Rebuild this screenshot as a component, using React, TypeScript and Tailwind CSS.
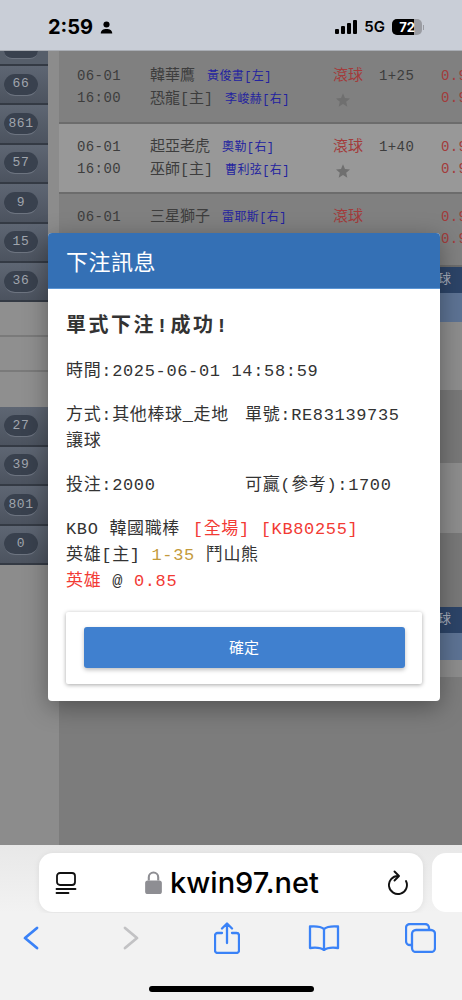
import React from "react";

const mono = "font-['Liberation_Mono','Noto_Sans_CJK_TC',monospace]";

function Pill({ n }: { n?: string }) {
  return (
    <div className="h-[39.4px] shrink-0 flex items-center pl-1 bg-gradient-to-b from-[#5e6673] to-[#4c535f] border-b-2 border-[#343a44]">
      {n !== undefined && (
        <div className={`w-[34px] h-[22px] rounded-full bg-[#39414e] border-b border-[#6d7480] flex items-center justify-center text-[#a0a5ad] text-[13px] tracking-[0.6px] ${mono}`}>
          {n}
        </div>
      )}
    </div>
  );
}

function Game({ dark, first, date, time, a, ap, b, bp, hdp, star = true }: any) {
  const base = dark
    ? `flex pl-[18px] h-[73px] border-b-2 border-[#6c6c6c] overflow-hidden shrink-0 bg-[#808080] ${mono}`
    : `flex pl-[18px] h-[70px] border-b-2 border-[#6c6c6c] overflow-hidden shrink-0 bg-[#989898] ${mono}`;
  return (
    <div className={first ? `${base} pt-[17px]` : `${base} pt-[15px]`}>
      <div className="w-[73px] shrink-0 flex flex-col gap-[5px] text-[14px] leading-[17px] tracking-[0.4px] text-[#3d3d3d]">
        <span>{date}</span>
        <span>{time}</span>
      </div>
      <div className="w-[183px] shrink-0 flex flex-col gap-[5px] text-[15px] leading-[17px] text-[#3d3d3d] whitespace-nowrap">
        <span>{a} <span className="text-[12px] tracking-[0.4px] text-[#23239f] ml-[3px]">{ap}</span></span>
        <span>{b} <span className="text-[12px] tracking-[0.4px] text-[#23239f] ml-[3px]">{bp}</span></span>
      </div>
      <div className="w-[46px] shrink-0 flex flex-col text-[15px] leading-[17px] text-[#a33b3b]">
        <span>滾球</span>
        {star && (
          <svg viewBox="0 0 24 24" className="w-[16px] h-[16px] mt-[7px] ml-[2px]" fill="#6f6f6f"><path d="M12 2l3 7 7.500 .7-5.700 5 1.700 7.300-6.500-3.900-6.500 3.900 1.700-7.300-5.700-5 7.500-.7z" /></svg>
        )}
      </div>
      <div className="w-[62px] shrink-0 text-[14px] leading-[17px] tracking-[0.4px] text-[#3d3d3d]">{hdp}</div>
      <div className="shrink-0 flex flex-col gap-[5px] text-[14px] leading-[17px] tracking-[0.4px] text-[#a33b3b]">
        <span>0.9</span>
        <span>0.9</span>
      </div>
    </div>
  );
}

function Navy() {
  return <div className="h-[26px] shrink-0 flex items-center justify-end pr-[11px] pb-[3px] text-[#a6adbb] text-[13px] bg-[#2c4468]">球</div>;
}

export default function App() {
  return (
    <div className="relative w-[462px] h-[1000px] overflow-hidden flex flex-col bg-[#8c8c8c] font-['Liberation_Sans','Noto_Sans_CJK_TC',sans-serif]">
      {/* status bar */}
      <div className="h-[51px] shrink-0 bg-[#c9ced7] border-b border-[#a9adb4] flex items-center pt-[4px] pl-[48px] pr-[38px] text-black">
        <span className="text-[20px] font-bold font-['Inter','Liberation_Sans',sans-serif]">2:59</span>
        <svg viewBox="0 0 14 14" className="w-[13px] h-[13px] ml-[7px]" fill="#000"><circle cx="7" cy="3.800" r="3.300" /><path d="M.8 13.500c0-3.500 2.700-5 6.200-5s6.200 1.500 6.200 5z" /></svg>
        <div className="flex-1" />
        <div className="flex items-end gap-[2px] h-[14px]">
          <div className="w-[4px] h-[5px] bg-black rounded-[1px]" />
          <div className="w-[4px] h-[8px] bg-black rounded-[1px]" />
          <div className="w-[4px] h-[11px] bg-black rounded-[1px]" />
          <div className="w-[4px] h-[14px] bg-black rounded-[1px]" />
        </div>
        <span className="ml-[7px] text-[15px] font-semibold font-['Inter','Liberation_Sans',sans-serif]">5G</span>
        <div className="ml-[7px] relative w-[30px] h-[16px] rounded-[5px] bg-[#9a9ca2] overflow-hidden flex items-center justify-center">
          <div className="absolute left-0 top-0 bottom-0 w-[22px] bg-black" />
          <span className="relative text-white text-[13px] font-bold leading-none font-['Inter','Liberation_Sans',sans-serif]">72</span>
        </div>
        <div className="ml-[1px] w-[1px] h-[5px] bg-[#9a9ca2]" />
      </div>

      {/* page behind modal */}
      <div className="h-[794px] shrink-0 flex overflow-hidden">
        <div className="w-[48px] shrink-0 flex flex-col">
          <div className="h-[15px] shrink-0 flex pl-1 bg-[#565e6a] border-b-2 border-[#343a44]">
            <div className="w-[34px] h-[8px] rounded-b-full bg-[#39414e] border-b border-[#6d7480]" />
          </div>
          <Pill n="66" />
          <Pill n="861" />
          <Pill n="57" />
          <Pill n="9" />
          <Pill n="15" />
          <Pill n="36" />
          <div className="h-[35px] shrink-0 bg-[#8f8f8f] border-b-2 border-[#7a7a7a]" />
          <div className="h-[35px] shrink-0 bg-[#8f8f8f] border-b-2 border-[#7a7a7a]" />
          <div className="h-[35px] shrink-0 bg-[#8f8f8f]" />
          <Pill n="27" />
          <Pill n="39" />
          <Pill n="801" />
          <Pill n="0" />
        </div>
        <div className="w-[11px] shrink-0" />
        <div className="flex-1 min-w-0 flex flex-col overflow-hidden">
          <Game dark first date="06-01" time="16:00" a="韓華鷹" ap="黃俊書[左]" b="恐龍[主]" bp="李峻赫[右]" hdp="1+25" />
          <Game date="06-01" time="16:00" a="起亞老虎" ap="奧勒[右]" b="巫師[主]" bp="曹利弦[右]" hdp="1+40" />
          <Game dark date="06-01" a="三星獅子" ap="雷耶斯[右]" star={false} />
          <Navy />
          <div className="h-[29px] shrink-0 bg-[#5d7394]" />
          <div className="h-[68px] shrink-0 bg-[#8d8d8d]" />
          <div className="h-[73px] shrink-0 bg-[#787878]" />
          <div className="h-[70px] shrink-0 bg-[#8d8d8d]" />
          <div className="h-[74px] shrink-0 bg-[#787878]" />
          <Navy />
          <div className="h-[27px] shrink-0 bg-[#5d7394]" />
          <div className="h-[17px] shrink-0 bg-[#8d8d8d]" />
          <div className="flex-1 bg-[#7c7c7c]" />
        </div>
      </div>

      {/* safari toolbar */}
      <div className="flex-1 bg-[#f2f2f2] relative">
        <div className="h-[68px] bg-gradient-to-b from-[#e8e8e8] to-[#f2f2f2] pt-[8px] pl-[39px] flex gap-[9px] overflow-hidden">
          <div className="w-[384px] h-[59px] shrink-0 bg-white rounded-[14px] shadow-[0_1px_6px_rgba(0,0,0,0.08)] flex items-center pl-[16px] pr-[15px]">
            <svg viewBox="0 0 22 24" className="w-[22px] h-[24px]" fill="none" stroke="#111" strokeWidth="1.800" strokeLinecap="round">
              <rect x="2" y="2" width="18" height="12" rx="3" />
              <path d="M1.500 18h19M1.500 22h12" />
            </svg>
            <div className="flex-1 flex items-center justify-center pr-[1px]">
              <svg viewBox="0 0 16 22" className="w-[17px] h-[23px] mr-[8px]" fill="#8e8e93">
                <path d="M3.500 9V6a4.500 4.500 0 0 1 9 0v3" fill="none" stroke="#8e8e93" strokeWidth="2" />
                <rect x="0" y="9" width="16" height="13" rx="2.500" />
              </svg>
              <span className="text-[29px] font-medium leading-none text-black font-['Inter','Liberation_Sans',sans-serif]">kwin97.net</span>
            </div>
            <svg viewBox="0 0 20 25" className="w-[20px] h-[25px]" fill="none" stroke="#111" strokeWidth="1.900" strokeLinecap="round" strokeLinejoin="round">
              <path d="M10 6A9 9 0 1 0 18 11" />
              <path d="M6.500 1.500L11 6l-4.500 4.500" />
            </svg>
          </div>
          <div className="w-[60px] h-[59px] shrink-0 bg-white rounded-l-[14px]" />
        </div>
        <div className="h-[50px] flex items-center pl-[23px]">
          <svg viewBox="0 0 16 24" className="w-[16px] h-[24px] shrink-0" fill="none" stroke="#3a82f7" strokeWidth="2.800" strokeLinecap="round" strokeLinejoin="round"><path d="M14 2L2 12l12 10" /></svg>
          <svg viewBox="0 0 16 24" className="w-[16px] h-[24px] shrink-0 ml-[84px]" fill="none" stroke="#c2c2c4" strokeWidth="2.800" strokeLinecap="round" strokeLinejoin="round"><path d="M2 2l12 10L2 22" /></svg>
          <svg viewBox="0 0 26 32" className="w-[26px] h-[32px] shrink-0 ml-[75px]" fill="none" stroke="#3a82f7" strokeWidth="2.300" strokeLinecap="round" strokeLinejoin="round"><path d="M8 11H3.500A2.500 2.500 0 0 0 1 13.500v15A2.500 2.500 0 0 0 3.500 31h19a2.500 2.500 0 0 0 2.500-2.500v-15a2.500 2.500 0 0 0-2.500-2.500H18M13 21V2M8 6.500L13 1.500l5 5" /></svg>
          <svg viewBox="0 0 32 26" className="w-[32px] h-[26px] shrink-0 ml-[68px]" fill="none" stroke="#3a82f7" strokeWidth="2.300" strokeLinecap="round" strokeLinejoin="round"><path d="M16 4C13 1.500 8 1 2 1.500V23c6-.7 11-.4 14 2 3-2.400 8-2.700 14-2V1.500C24 1 19 1.500 16 4zM16 4v21" /></svg>
          <svg viewBox="0 0 31 30" className="w-[31px] h-[30px] shrink-0 ml-[65px]" fill="none" stroke="#3a82f7" strokeWidth="2.300" strokeLinejoin="round"><path d="M7 22H5a4 4 0 0 1-4-4V5a4 4 0 0 1 4-4h15a4 4 0 0 1 4 4v2" /><rect x="7" y="7" width="23" height="22" rx="4" /></svg>
        </div>
        <div className="absolute left-[149px] top-[141px] w-[165px] h-[6px] rounded-full bg-black" />
      </div>

      {/* modal */}
      <div className={`absolute left-[48px] top-[233px] w-[392px] h-[468px] bg-white rounded-[4px] shadow-[0_6px_24px_rgba(0,0,0,0.35)] overflow-hidden flex flex-col ${mono} text-[#333333]`}>
        <div className="h-[56px] shrink-0 bg-[#3470b5] border-b border-[#5b95d4] flex items-center pb-[2px] pl-[18px] text-white text-[22px] tracking-[0.5px] font-['Noto_Sans_CJK_TC',sans-serif] leading-none">
          下注訊息
        </div>
        <div className="flex-1 flex flex-col px-[18px] text-[17px] leading-[26px] tracking-[0.65px]">
          <div className="mt-[24px] text-[20px] font-bold leading-[28px] tracking-[2.5px]">單式下注!成功!</div>
          <div className="mt-[18px]">時間:2025-06-01 14:58:59</div>
          <div className="mt-[18px] flex">
            <span className="w-[179px] shrink-0 whitespace-nowrap">方式:其他棒球_走地</span>
            <span className="whitespace-nowrap">單號:RE83139735</span>
          </div>
          <div>讓球</div>
          <div className="mt-[18px] flex">
            <span className="w-[179px] shrink-0">投注:2000</span>
            <span className="whitespace-nowrap">可贏(參考):1700</span>
          </div>
          <div className="mt-[18px] whitespace-nowrap">
            KBO 韓國職棒 <span className="text-[#f23a34] ml-[2px]">[全場] [KB80255]</span>
          </div>
          <div className="whitespace-nowrap">
            英雄[主] <span className="text-[#c39a3c]">1-35</span> 鬥山熊
          </div>
          <div className="whitespace-nowrap">
            <span className="text-[#f23a34]">英雄</span> @ <span className="text-[#f23a34]">0.85</span>
          </div>
          <div className="mt-[17px] h-[72px] pb-[2px] bg-white shadow-[0_1px_4px_rgba(0,0,0,0.35)] rounded-[2px] flex items-center justify-center">
            <div className="w-[321px] h-[41px] rounded-[3px] bg-[#4080cf] shadow-[0_2px_4px_rgba(0,0,0,0.25)] flex items-center justify-center text-white text-[15px] tracking-normal font-['Noto_Sans_CJK_TC',sans-serif]">確定</div>
          </div>
        </div>
      </div>
    </div>
  );
}
